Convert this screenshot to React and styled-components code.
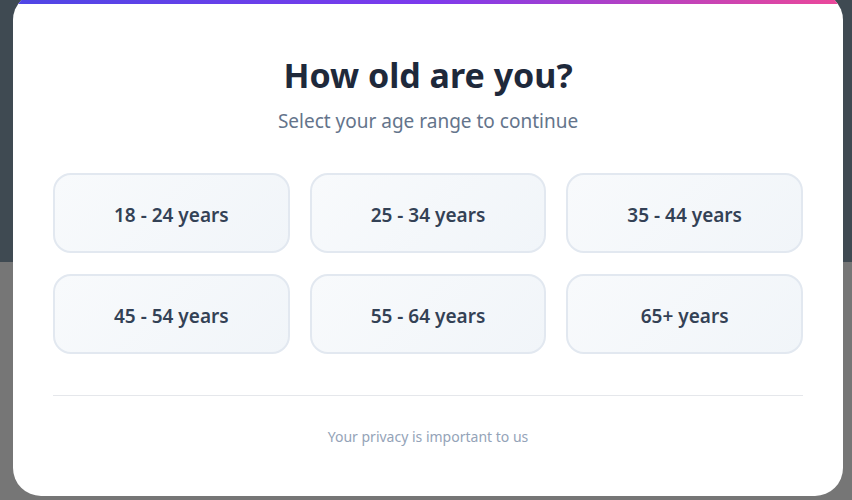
import styled, { createGlobalStyle } from "styled-components";

const GlobalStyle = createGlobalStyle`
  * { box-sizing: border-box; }
  html, body { margin: 0; padding: 0; }
  body {
    font-family: "Noto Sans", "Open Sans", sans-serif;
    overflow: hidden;
  }
`;

// dark header on top, grey overlay below, as behind the dialog
const Backdrop = styled.div`
  width: 852px;
  height: 500px;
  padding: 0 9px 0 13px;
  background: linear-gradient(to bottom, #3f4a52 0, #3f4a52 262px, #767676 262px, #767676 100%);
  overflow: hidden;
`;

const Modal = styled.div`
  margin-top: -8px;
  width: 830px;
  height: 504px;
  background: #ffffff;
  border-radius: 28px;
  overflow: hidden;
  display: flex;
  flex-direction: column;
`;

const TopBar = styled.div`
  height: 12px;
  flex-shrink: 0;
  background: linear-gradient(90deg, #4f46e5 0%, #7c3aed 50%, #ec4899 100%);
`;

const Body = styled.div`
  padding: 50px 40px 0;
  display: flex;
  flex-direction: column;
  align-items: center;
`;

const Title = styled.h1`
  margin: 0;
  font-size: 34px;
  line-height: 42px;
  font-weight: 700;
  color: #1e293b;
  text-align: center;
`;

const Subtitle = styled.p`
  margin: 11px 0 0;
  font-size: 19px;
  line-height: 28px;
  color: #64748b;
  text-align: center;
`;

const Grid = styled.div`
  margin-top: 38px;
  width: 100%;
  display: grid;
  grid-template-columns: repeat(3, 1fr);
  gap: 21px 20px;
`;

const AgeButton = styled.button`
  height: 80px;
  padding: 4px 0 0;
  border: 2px solid #e2e8f0;
  border-radius: 18px;
  background: linear-gradient(135deg, #f8fafc 0%, #f1f5f9 100%);
  font-family: inherit;
  font-size: 19px;
  font-weight: 600;
  color: #334155;
  cursor: pointer;
  &:hover {
    border-color: #a5b4fc;
  }
`;

const Divider = styled.hr`
  width: 100%;
  margin: 41px 0 0;
  border: 0;
  border-top: 1px solid #e5e7eb;
`;

const Footer = styled.p`
  margin: 31px 0 0;
  font-size: 14px;
  line-height: 20px;
  color: #94a3b8;
  text-align: center;
`;

const ranges = [
  "18 - 24 years",
  "25 - 34 years",
  "35 - 44 years",
  "45 - 54 years",
  "55 - 64 years",
  "65+ years",
];

export default function App() {
  return (
    <>
      <GlobalStyle />
      <Backdrop>
        <Modal>
          <TopBar />
          <Body>
            <Title>How old are you?</Title>
            <Subtitle>Select your age range to continue</Subtitle>
            <Grid>
              {ranges.map((r) => (
                <AgeButton key={r}>{r}</AgeButton>
              ))}
            </Grid>
            <Divider />
            <Footer>Your privacy is important to us</Footer>
          </Body>
        </Modal>
      </Backdrop>
    </>
  );
}
